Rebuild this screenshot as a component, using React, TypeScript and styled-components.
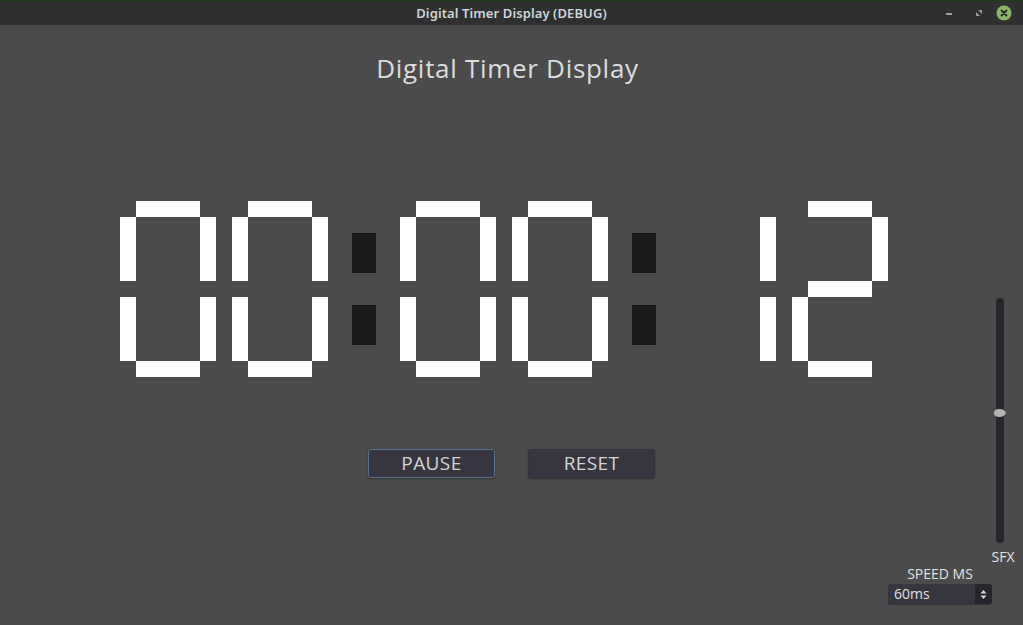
import React from "react";
import styled, { createGlobalStyle } from "styled-components";

const Global = createGlobalStyle`
  html, body { margin: 0; padding: 0; background: #4b4b4b; }
  body { width: 1023px; height: 625px; overflow: hidden; font-family: "Open Sans", "Noto Sans", sans-serif; }
  * { box-sizing: border-box; }
`;

const Window = styled.div`
  width: 1023px;
  height: 625px;
  display: flex;
  flex-direction: column;
  background: #4b4b4b;
`;

const TitleBar = styled.div`
  height: 25px;
  flex: none;
  background: #303030;
  border-top: 1px solid #1d3a14;
  display: grid;
  grid-template-columns: 1fr auto 1fr;
  align-items: center;
`;

const TitleText = styled.div`
  grid-column: 2;
  font-family: "Noto Sans", sans-serif;
  font-size: 13px;
  font-weight: 600;
  color: #cdd5da;
  letter-spacing: 0.1px;
`;

const Controls = styled.div`
  grid-column: 3;
  justify-self: end;
  display: flex;
  align-items: center;
  margin-right: 9px;
  height: 24px;
`;

const CtrlSlot = styled.div<{ $w: number }>`
  width: ${(p) => p.$w}px;
  height: 24px;
  display: flex;
  align-items: center;
  justify-content: center;
`;

const Body = styled.div`
  flex: 1;
  display: grid;
  grid-template: 1fr / 1fr;
`;

const Center = styled.div`
  grid-area: 1 / 1;
  display: flex;
  flex-direction: column;
  align-items: center;
`;

const Heading = styled.h1`
  margin: 26px 8px 0 0;
  font-size: 26px;
  line-height: 35px;
  font-weight: 400;
  color: #dcdcdc;
  letter-spacing: 0.7px;
`;

const Display = styled.div`
  margin: 115px 15px 0 0;
  display: flex;
  align-items: flex-start;
`;

const Pair = styled.div`
  display: flex;
  gap: 16px;
`;

const DigitGrid = styled.div`
  display: grid;
  grid-template-columns: repeat(6, 16px);
  grid-template-rows: repeat(11, 16px);
`;

const Seg = styled.div<{ $r: string; $c: string }>`
  grid-row: ${(p) => p.$r};
  grid-column: ${(p) => p.$c};
  background: #ffffff;
`;

const Colon = styled.div`
  width: 24px;
  margin: 0 24px;
  padding-top: 32px;
  display: flex;
  flex-direction: column;
  gap: 32px;
`;

const Dot = styled.div`
  width: 24px;
  height: 40px;
  background: #1a1a1a;
`;

const Buttons = styled.div`
  margin-top: 72px;
  display: flex;
  gap: 33px;
`;

const Button = styled.button<{ $focused?: boolean }>`
  width: 127px;
  height: 29px;
  padding: 0;
  border-radius: 3px;
  border: 1px solid ${(p) => (p.$focused ? "#58718f" : "#34333b")};
  background: #37353f;
  box-shadow: 0 1px 2px rgba(0, 0, 0, 0.35);
  color: #d4d4d4;
  font-family: "Open Sans", "Noto Sans", sans-serif;
  font-size: 19px;
  line-height: 27px;
  letter-spacing: 0.4px;
  display: flex;
  align-items: center;
  justify-content: center;
`;

const Side = styled.div`
  grid-area: 1 / 1;
  display: flex;
  flex-direction: column;
  align-items: flex-end;
  justify-content: flex-end;
  padding-bottom: 21px;
`;

const SliderGroup = styled.div`
  width: 24px;
  margin-right: 8px;
  display: flex;
  flex-direction: column;
  align-items: center;
`;

const Track = styled.div`
  position: relative;
  width: 8px;
  height: 245px;
  margin-right: 6px;
  border-radius: 4px;
  background: #27262c;
`;

const Grabber = styled.svg`
  position: absolute;
  left: -3px;
  top: 110px;
`;

const SmallLabel = styled.div`
  font-size: 14px;
  line-height: 16px;
  color: #e2e2e2;
  white-space: nowrap;
`;

const SfxLabel = styled(SmallLabel)`
  margin-top: 6px;
`;

const SpeedGroup = styled.div`
  width: 104px;
  margin-right: 31px;
  margin-top: 1px;
  display: flex;
  flex-direction: column;
  align-items: center;
  gap: 2px;
`;

const Select = styled.div`
  width: 104px;
  height: 20px;
  display: flex;
  border-radius: 3px;
  overflow: hidden;
  background: #37353f;
  box-shadow: 0 1px 1px rgba(0, 0, 0, 0.3);
`;

const SelectValue = styled.div`
  flex: 1;
  padding-left: 6px;
  font-size: 14px;
  line-height: 20px;
  color: #e0e0e0;
`;

const SelectArrow = styled.div`
  width: 17px;
  background: #26252b;
  display: flex;
  align-items: center;
  justify-content: center;
`;

type SegKey = "a" | "b" | "c" | "d" | "e" | "f" | "g";
const SEGS: Record<SegKey, [string, string]> = {
  a: ["1", "2 / 6"],
  b: ["2 / 6", "6"],
  c: ["7 / 11", "6"],
  d: ["11", "2 / 6"],
  e: ["7 / 11", "1"],
  f: ["2 / 6", "1"],
  g: ["6", "2 / 6"],
};
const DIGITS: Record<string, SegKey[]> = {
  "0": ["a", "b", "c", "d", "e", "f"],
  "1": ["b", "c"],
  "2": ["a", "b", "g", "e", "d"],
  "3": ["a", "b", "g", "c", "d"],
  "4": ["f", "g", "b", "c"],
  "5": ["a", "f", "g", "c", "d"],
  "6": ["a", "f", "g", "e", "c", "d"],
  "7": ["a", "b", "c"],
  "8": ["a", "b", "c", "d", "e", "f", "g"],
  "9": ["a", "b", "c", "d", "f", "g"],
};

const Digit = ({ v }: { v: string }) => (
  <DigitGrid>
    {DIGITS[v].map((k) => (
      <Seg key={k} $r={SEGS[k][0]} $c={SEGS[k][1]} />
    ))}
  </DigitGrid>
);

const DigitPair = ({ v }: { v: string }) => (
  <Pair>
    <Digit v={v[0]} />
    <Digit v={v[1]} />
  </Pair>
);

const ColonMark = () => (
  <Colon>
    <Dot />
    <Dot />
  </Colon>
);

export default function App() {
  return (
    <>
      <Global />
      <Window>
        <TitleBar>
          <TitleText>Digital Timer Display (DEBUG)</TitleText>
          <Controls>
            <CtrlSlot $w={30}>
              <svg width="8" height="8" viewBox="0 0 8 8">
                <rect x="1" y="4" width="6" height="2" fill="#9c9c9c" />
              </svg>
            </CtrlSlot>
            <CtrlSlot $w={30}>
              <svg width="8" height="8" viewBox="0 0 8 8">
                <path d="M3 1 L7 1 L7 5 Z" fill="#9c9c9c" />
                <path d="M1 3 L1 7 L5 7 Z" fill="#9c9c9c" />
              </svg>
            </CtrlSlot>
            <CtrlSlot $w={20}>
              <svg width="16" height="16" viewBox="0 0 16 16">
                <circle cx="8" cy="8" r="7.5" fill="#8bb66a" />
                <path d="M5.5 5.5 L10.5 10.5 M10.5 5.5 L5.5 10.5" stroke="#2c2c2c" strokeWidth="1.8" strokeLinecap="round" />
              </svg>
            </CtrlSlot>
          </Controls>
        </TitleBar>
        <Body>
          <Center>
            <Heading>Digital Timer Display</Heading>
            <Display>
              <DigitPair v="00" />
              <ColonMark />
              <DigitPair v="00" />
              <ColonMark />
              <DigitPair v="12" />
            </Display>
            <Buttons>
              <Button $focused>PAUSE</Button>
              <Button>RESET</Button>
            </Buttons>
          </Center>
          <Side>
            <SliderGroup>
              <Track>
                <Grabber width="14" height="10" viewBox="0 0 14 10">
                  <path d="M1 5 C1 1.5 4 1 7 1 C10 1 12 3 13 5 C12 7 10 9 7 9 C4 9 1 8.5 1 5 Z" fill="#b4b4b4" />
                </Grabber>
              </Track>
              <SfxLabel>SFX</SfxLabel>
            </SliderGroup>
            <SpeedGroup>
              <SmallLabel>SPEED MS</SmallLabel>
              <Select>
                <SelectValue>60ms</SelectValue>
                <SelectArrow>
                  <svg width="7" height="11" viewBox="0 0 7 11">
                    <path d="M0.5 4.5 L3.5 1 L6.5 4.5 Z M0.5 6.5 L3.5 10 L6.5 6.5 Z" fill="#d8d8d8" />
                  </svg>
                </SelectArrow>
              </Select>
            </SpeedGroup>
          </Side>
        </Body>
      </Window>
    </>
  );
}
